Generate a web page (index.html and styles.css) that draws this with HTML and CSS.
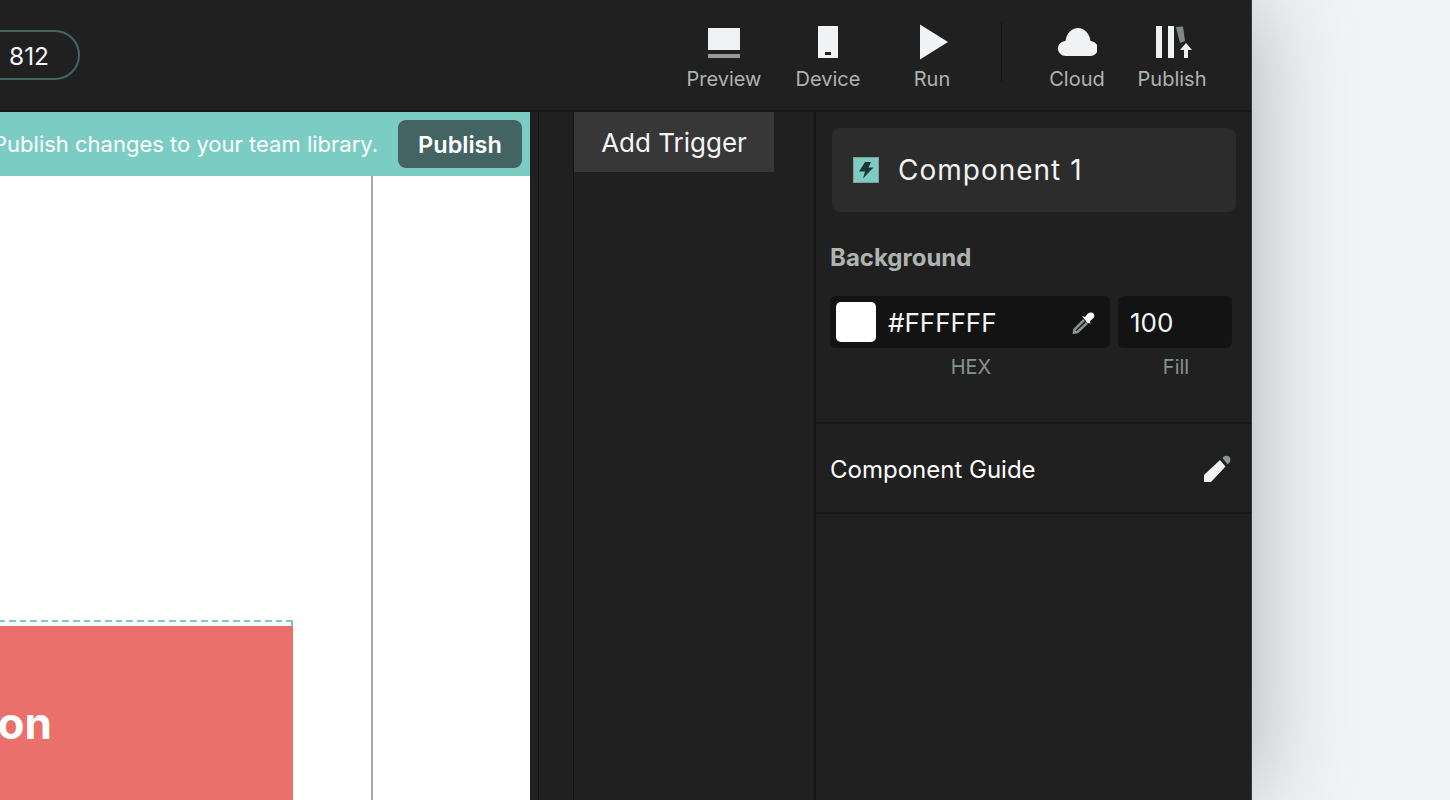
FILE: index.html
```
<!DOCTYPE html>
<html lang="en">
<head>
<meta charset="utf-8">
<title>Component editor</title>
<link rel="stylesheet" href="styles.css">
</head>
<body>
<div class="app">
  <header class="topbar">
    <div class="topbar-left"><div class="size-pill">812</div></div>
    <nav class="tools">
      <div class="tool tool-preview">
        <svg class="tool-icon" width="40" height="40" viewBox="0 0 40 40"><rect x="4" y="4" width="32" height="22" fill="#f1f2f4"/><rect x="4" y="30" width="32" height="4" fill="#9a9a9a"/></svg>
        <span>Preview</span>
      </div>
      <div class="tool tool-device">
        <svg class="tool-icon" width="40" height="40" viewBox="0 0 40 40"><rect x="10" y="2" width="20" height="32" fill="#f1f2f4"/><rect x="17" y="28" width="6" height="3" fill="#202020"/></svg>
        <span>Device</span>
      </div>
      <div class="tool tool-run">
        <svg class="tool-icon" width="40" height="40" viewBox="0 0 40 40"><path d="M8 0.500 L36 18 L8 35.500 Z" fill="#f1f2f4"/></svg>
        <span>Run</span>
      </div>
      <div class="tool-sep"></div>
      <div class="tool tool-cloud">
        <svg class="tool-icon" width="40" height="40" viewBox="-1 0 40 40"><path d="M8 32 C3.500 32 0 28.600 0 24.500 C0 20.500 3 17.500 7.500 17 C8.500 9.500 13.500 4 20 4 C26.500 4 31.500 9.500 32.500 17 C37 17.500 40 20.500 40 24.500 C40 28.600 36.500 32 32 32 Z" fill="#f1f2f4"/></svg>
        <span>Cloud</span>
      </div>
      <div class="tool tool-publish">
        <svg class="tool-icon" width="40" height="40" viewBox="0 0 40 40"><rect x="4" y="2" width="6" height="32" fill="#f1f2f4"/><rect x="16" y="2" width="6" height="32" fill="#f1f2f4"/><path d="M24 3 L31 2.500 L33 17 L28 19 Z" fill="#7f8a87"/><path d="M34 19 L40 26 L36 26 L36 34 L32 34 L32 26 L28 26 Z" fill="#f1f2f4"/></svg>
        <span>Publish</span>
      </div>
    </nav>
  </header>
  <div class="workspace">
    <section class="stage">
      <div class="banner">
        <span class="banner-text">Publish changes to your team library.</span>
        <button class="banner-btn">Publish</button>
      </div>
      <div class="canvas">
        <div class="artboard">
          <div class="selection">
            <div class="comp"><span>Button</span></div>
          </div>
        </div>
      </div>
    </section>
    <div class="strip"></div>
    <aside class="triggers">
      <div class="add-trigger">Add Trigger</div>
    </aside>
    <aside class="inspector">
      <div class="inspector-top">
        <div class="comp-title">
          <svg width="28" height="28" viewBox="0 0 28 28"><rect x="1.500" y="1.500" width="25" height="25" fill="#7bcdc4" stroke="#8d9b98"/><path d="M13 6 L19 6 L16.500 11.500 L21.500 11.500 L11 22.500 L13 15.500 L7 15.500 Z" fill="#1f3533"/></svg>
          <span>Component 1</span>
        </div>
        <h3 class="section-label">Background</h3>
        <div class="fields">
          <div class="field-col field-hex">
            <div class="field hex-field">
              <div class="swatch"></div>
              <span class="hex-value">#FFFFFF</span>
              <svg class="dropper" width="24" height="24" viewBox="0 0 24 24"><path d="M12 10 L2.500 19.500 L2 22.500 L5.500 22 L15 13" fill="none" stroke="#8a9693" stroke-width="2.500"/><path d="M10 6 L13 7 L16 3.500 C17.500 2 20.500 2 21.500 3.500 C22.800 5 22.500 7 21 8.500 L18 11 L18.500 13.500 L15.500 13 Z" fill="#fff"/></svg>
            </div>
            <span class="field-caption">HEX</span>
          </div>
          <div class="field-col field-fill">
            <div class="field fill-field">100</div>
            <span class="field-caption">Fill</span>
          </div>
        </div>
      </div>
      <div class="guide-row">
        <span>Component Guide</span>
        <svg width="30" height="30" viewBox="0 0 30 30"><path d="M18 6 L23.500 12.500 L9 28 L2 28 L2 21 Z" fill="#f1f2f4"/><path d="M20.500 4 C22 1.500 25 1 27 2.500 C29 4.500 28.700 7 27.500 8.500 L25.500 10.500 Z" fill="#8a9693"/></svg>
      </div>
    </aside>
  </div>
</div>
</body>
</html>
```
FILE: styles.css
```
* { box-sizing: border-box; }
html, body { margin: 0; height: 100%; }
body {
  background: #f3f4f8;
  font-family: Inter, "Liberation Sans", sans-serif;
  overflow: hidden;
}
.app {
  width: 1252px;
  height: 800px;
  background: #202020;
  display: flex;
  flex-direction: column;
  border-right: 1px solid #3a3a3a;
  box-shadow: 0 0 96px rgba(100, 110, 105, 0.5);
  overflow: hidden;
}
.topbar {
  height: 112px;
  flex: none;
  display: flex;
  border-bottom: 2px solid #161616;
}
.topbar-left {
  width: 660px;
  flex: none;
  display: flex;
  justify-content: flex-end;
  padding: 30px 580px 0 0;
}
.size-pill {
  flex: none;
  width: 200px;
  height: 50px;
  border: 2px solid #426663;
  border-radius: 25px;
  color: #f4f5f6;
  font-size: 24.500px;
  line-height: 48px;
  padding-left: 127px;
}
.tools {
  flex: 1;
  display: flex;
  align-items: flex-start;
  position: relative;
}
.tool {
  display: flex;
  flex-direction: column;
  align-items: center;
  color: #adb4b2;
  font-size: 20px;
  line-height: 24px;
  padding-top: 24px;
  flex: none;
}
.tool-icon { display: block; margin-bottom: 3px; }
.tool-preview { width: 76px; margin-left: 26px; }
.tool-device { width: 64px; margin-left: 34px; }
.tool-run { width: 40px; margin-left: 52px; }
.tool-sep { width: 1px; height: 60px; background: #141414; margin: 22px 0 0 49px; flex: none; }
.tool-cloud { width: 56px; margin-left: 47px; }
.tool-publish { width: 68px; margin-left: 33px; }
.workspace { flex: 1; display: flex; min-height: 0; }
.stage {
  width: 530px;
  flex: none;
  display: flex;
  flex-direction: column;
  overflow: hidden;
}
.banner {
  height: 64px;
  background: #7bcdc4;
  display: flex;
  align-items: center;
  justify-content: flex-end;
  padding-right: 8px;
  flex: none;
  white-space: nowrap;
}
.banner-text { color: #fff; font-size: 22px; margin-right: 20px; flex: none; }
.banner-btn {
  width: 124px;
  height: 48px;
  flex: none;
  border: 0;
  border-radius: 8px;
  background: #436463;
  color: #fff;
  font: 600 23.500px Inter, "Liberation Sans", sans-serif;
}
.canvas { flex: 1; background: #fff; display: flex; justify-content: flex-end; overflow: hidden; }
.artboard {
  flex: none;
  width: 1000px;
  border-right: 2px solid #a6a9a8;
  margin-right: 157px;
  padding: 444px 78px 0 0;
}
.selection {
  position: relative;
  padding-top: 6px;
  height: 400px;
  background: repeating-linear-gradient(to left, #7bcdc4 0, #7bcdc4 6.670px, transparent 6.670px, transparent 10.670px) top / 100% 2px no-repeat;
}
.selection::after {
  content: "";
  position: absolute;
  top: 0;
  right: 0;
  width: 2px;
  height: 6px;
  background: #7bcdc4;
}
.comp {
  height: 100%;
  background: #e9706b;
  display: flex;
  justify-content: flex-end;
  color: #fff;
  font-size: 44px;
  font-weight: 700;
  line-height: 54px;
  padding: 70px 241px 0 0;
}
.strip { width: 44px; flex: none; background: #202020; border-right: 1px solid #141414; box-shadow: inset -34px 0 0 #202020, inset -35px 0 0 #141414; }
.triggers { width: 242px; flex: none; border-right: 2px solid #161616; }
.add-trigger {
  width: 200px;
  height: 60px;
  background: #373737;
  color: #f4f5f6;
  font-size: 26px;
  line-height: 62px;
  text-align: center;
}
.inspector { flex: 1; display: flex; flex-direction: column; }
.inspector-top { height: 312px; border-bottom: 2px solid #161616; padding: 16px 18px 0 14px; }
.comp-title {
  height: 84px;
  margin: 0 -3px 0 2px;
  background: #2c2c2c;
  border-radius: 8px;
  display: flex;
  align-items: center;
  gap: 18px;
  padding-left: 20px;
  color: #f0f3f3;
  font-size: 28px;
  letter-spacing: 1px;
}
.section-label { margin: 31px 0 0; color: #adb4b2; font-size: 24px; font-weight: 700; line-height: 30px; }
.fields { display: flex; gap: 8px; margin-top: 23px; }
.field-col { display: flex; flex-direction: column; align-items: center; }
.field-hex { width: 280px; }
.field-fill { width: 114px; }
.field { width: 100%; height: 52px; background: #131313; border-radius: 6px; color: #f4f5f6; font-size: 26px; }
.hex-field { display: flex; align-items: center; padding: 0 14px 0 6px; }
.swatch { width: 40px; height: 40px; background: #fff; border-radius: 5px; flex: none; }
.hex-value { margin-left: 12px; flex: 1; }
.fill-field { padding-left: 12px; line-height: 54px; }
.field-caption { color: #859290; font-size: 20px; line-height: 24px; margin-top: 7px; padding-left: 2px; }
.guide-row {
  height: 90px;
  border-bottom: 2px solid #161616;
  display: flex;
  align-items: center;
  justify-content: space-between;
  padding: 2px 19px 0 14px;
  color: #fff;
  font-size: 24px;
}
```
